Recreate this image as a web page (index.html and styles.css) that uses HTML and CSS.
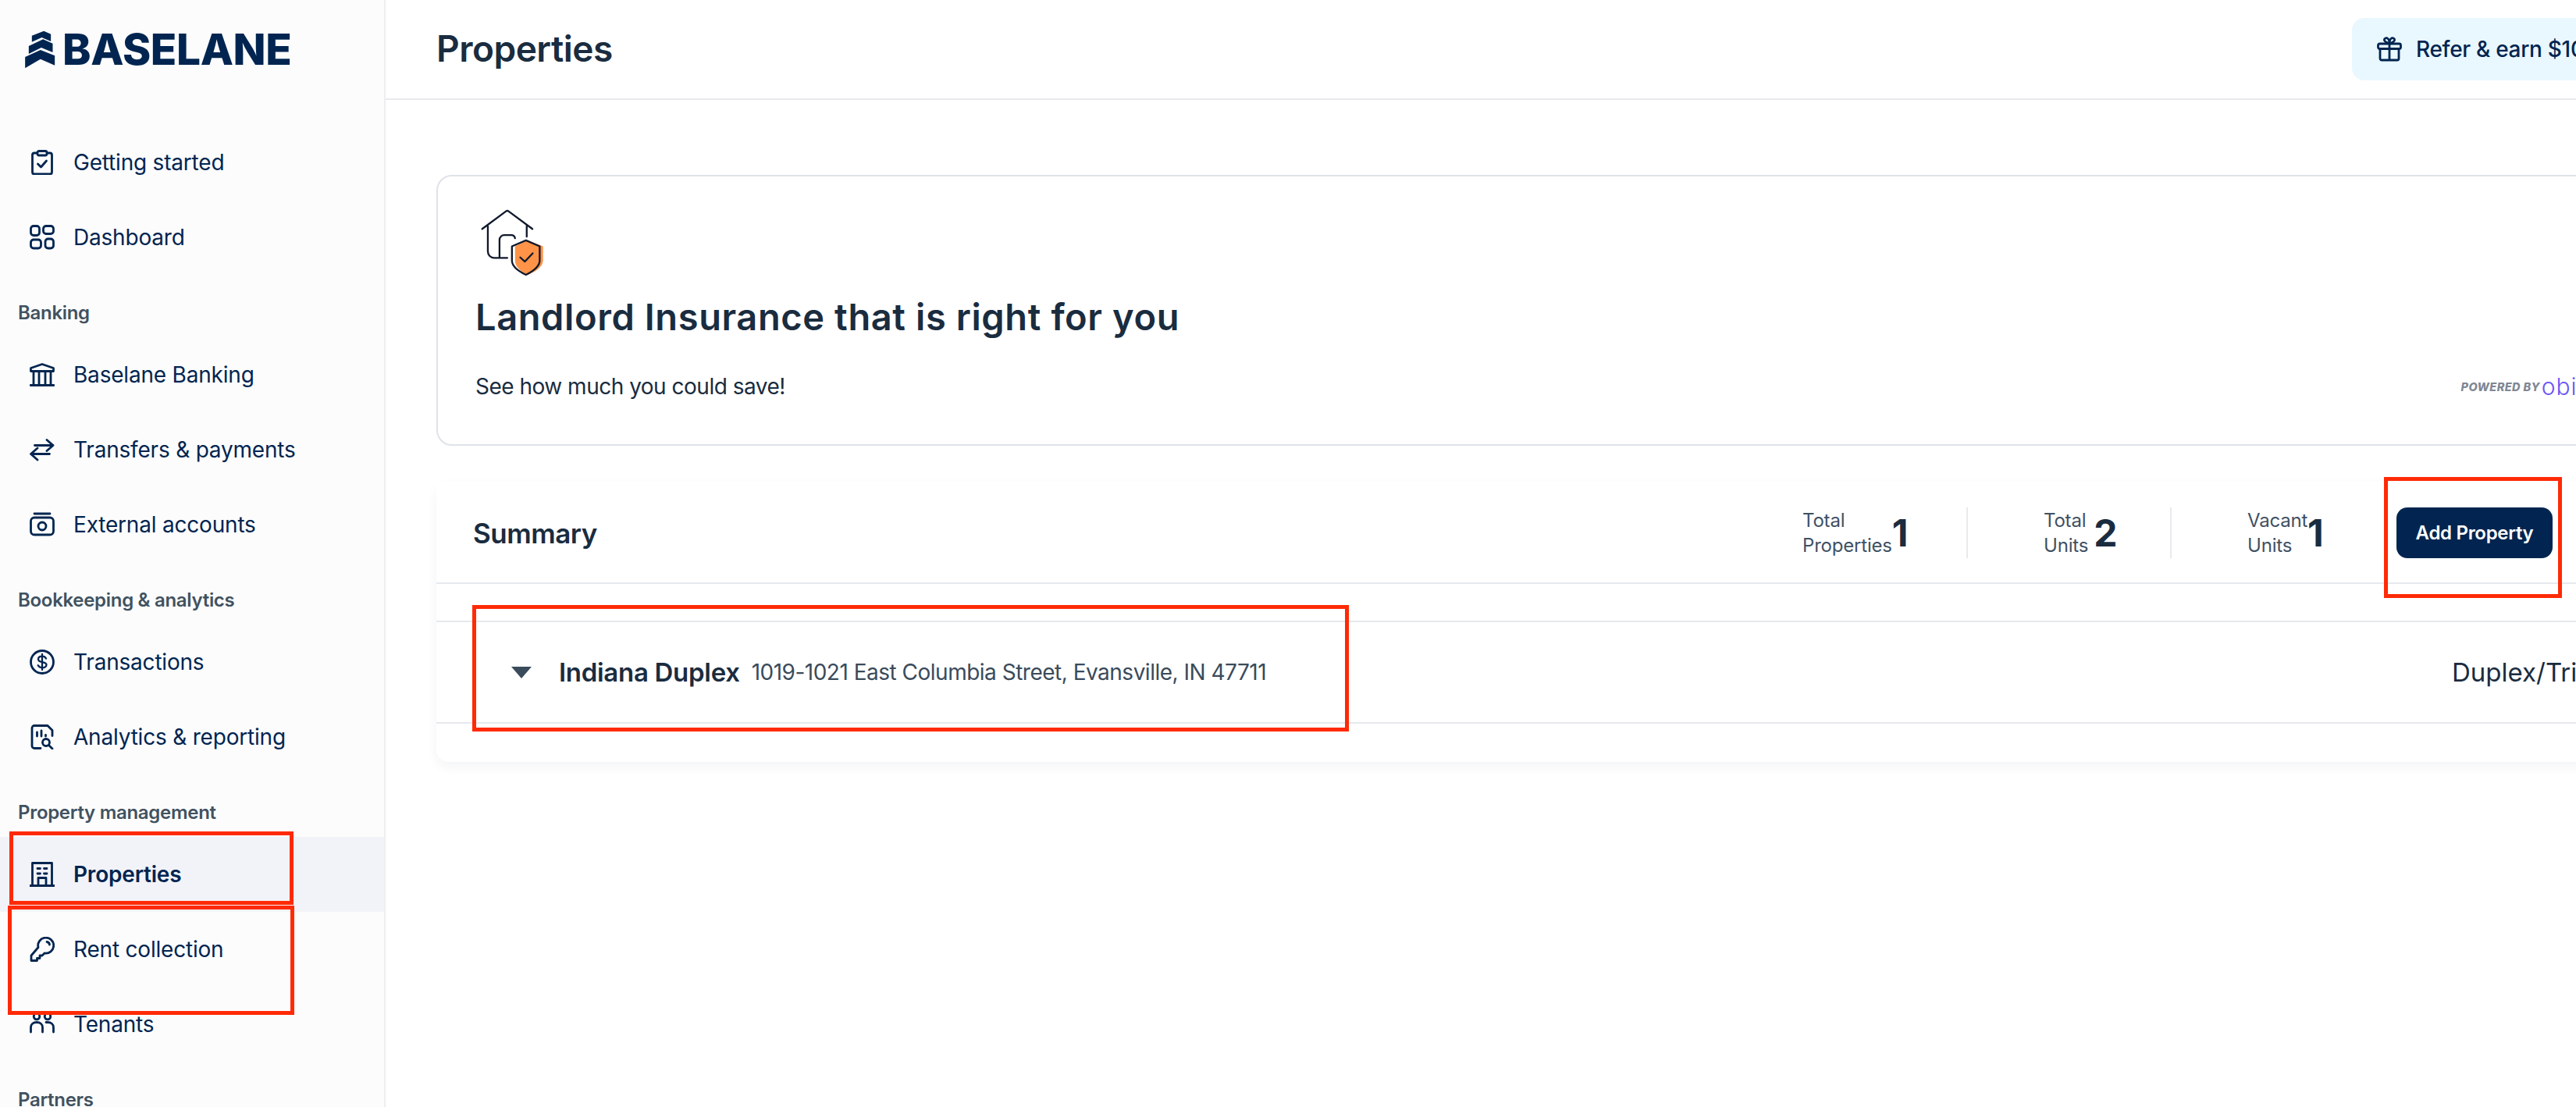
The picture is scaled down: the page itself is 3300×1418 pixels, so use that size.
FILE: index.html
```html
<!DOCTYPE html>
<html lang="en">
<head>
<meta charset="utf-8">
<title>Properties - Baselane</title>
<link rel="stylesheet" href="styles.css">
</head>
<body>
<div class="app">
  <aside class="sidebar">
    <div class="logo">
      <svg class="logo-mark" viewBox="60 55 125 150" aria-hidden="true"><path d="M66 160L125 133L180 155V192L125 168L66 203Z"/><path d="M80 118L135 92L172 108V142L128 124L80 148Z"/><path d="M92 78L138 60L165 72V100L130 85L92 102Z"/></svg>
      <span class="logo-text">BASELANE</span>
    </div>
    <nav class="nav">
      <a class="nav-item"><svg class="icon" viewBox="0 0 32 32"><rect x="3.500" y="4" width="25" height="27" rx="2.500"/><rect x="10" y="1.500" width="12" height="5.500" rx="2" class="fill-bg"/><path d="M10.500 18l4 4 7-8"/></svg><span>Getting started</span></a>
      <a class="nav-item"><svg class="icon" viewBox="0 0 32 32"><rect x="1.500" y="1.500" width="11" height="12" rx="3.500"/><rect x="17.500" y="1.500" width="13" height="10" rx="3.500"/><rect x="1.500" y="19" width="13" height="11" rx="3.500"/><rect x="20" y="18" width="10.500" height="12" rx="3.500"/></svg><span>Dashboard</span></a>
      <div class="nav-label">Banking</div>
      <a class="nav-item"><svg class="icon" viewBox="0 0 32 32"><path d="M1.500 11.500V7.500L16 2.500L30.500 7.500V11.500ZM1 29.500H31M5 12V29M12 12V29M20 12V29M27 12V29"/></svg><span>Baselane Banking</span></a>
      <a class="nav-item"><svg class="icon" viewBox="0 0 32 32"><path d="M22 3.500l8 7-8 7M30 10.500H6.500M10 14l-8.500 7.500L10 29M2 21.500H25.500"/></svg><span>Transfers &amp; payments</span></a>
      <a class="nav-item"><svg class="icon" viewBox="0 0 32 32"><path d="M6 2H26"/><rect x="1.500" y="7" width="29" height="22" rx="4.500"/><circle cx="16" cy="18" r="5"/></svg><span>External accounts</span></a>
      <div class="nav-label">Bookkeeping &amp; analytics</div>
      <a class="nav-item"><svg class="icon" viewBox="0 0 32 32"><circle cx="16" cy="16" r="14.500"/><path d="M21 11.500c-1-2-3-2.800-5-2.800-3 0-5 1.500-5 3.700 0 5 10.500 2.300 10.500 7.200 0 2.200-2.300 3.700-5.200 3.700-2.300 0-4.500-1-5.600-3M16 6v20" stroke-width="2.300"/></svg><span>Transactions</span></a>
      <a class="nav-item"><svg class="icon" viewBox="0 0 32 32"><path d="M14 30.500H6a3 3 0 0 1-3-3V4.500a3 3 0 0 1 3-3h17l6 6v7"/><path d="M9.500 10v5M15 8v7M20.500 13.500v1.500"/><circle cx="21" cy="23" r="4.500"/><path d="M24.500 26.500L29 31"/></svg><span>Analytics &amp; reporting</span></a>
      <div class="nav-label">Property management</div>
      <a class="nav-item active"><svg class="icon" viewBox="0 0 32 32"><path d="M0 30.500H32M3.500 30V1.500H28.500V30"/><path d="M10 8.500h3.500M18.500 8.500H22M10 15h3.500M18.500 15H22"/><path d="M11 30V20.500H21V30"/></svg><span>Properties</span></a>
      <a class="nav-item"><svg class="icon" viewBox="0 0 32 32"><path d="M11 13.500a10 10 0 1 1 8 7.500l-3 3h-3v3.500H9.500V30.500H2V24Z"/><path d="M22 6.500a4 4 0 0 1 3.500 3.500"/></svg><span>Rent collection</span></a>
      <a class="nav-item"><svg class="icon" viewBox="0 0 32 32"><circle cx="9" cy="6" r="3.800"/><circle cx="23" cy="6" r="3.800"/><path d="M1.500 26v-6c0-4 3-6.500 7.500-6.500s7.500 2.500 7.500 6.500v6M21 13.500h2c4.500 0 7.500 2.500 7.500 6.500v6"/></svg><span>Tenants</span></a>
      <div class="nav-label">Partners</div>
    </nav>
  </aside>
  <main class="main">
    <header class="topbar">
      <h1 class="page-title">Properties</h1>
      <a class="refer"><svg class="icon" viewBox="0 0 32 32"><rect x="1.500" y="9" width="29" height="6.500" rx="2"/><path d="M4 15.500V28a2 2 0 0 0 2 2H26a2 2 0 0 0 2-2V15.500M16 9V30M16 9c-2-1-6-2-6.500-4.500C9 2 12 .8 14 2.500c1.300 1 2 4 2 6.500 0-2.500.7-5.500 2-6.500 2-1.700 5-.5 4.500 2C22 7 18 8 16 9Z"/></svg><span>Refer &amp; earn $100</span></a>
    </header>
    <section class="content">
      <div class="promo">
        <svg class="promo-icon" viewBox="75 50 250 260" aria-hidden="true"><path class="shield-fill" d="M258 172L318 195V250C318 275 285 295 258 305C232 292 210 275 210 250V195Z"/><path class="line" d="M83 128L175 60a8 8 0 0 1 10 0L277 128M105 118V215a25 25 0 0 0 25 25H180M150 240V170a18 18 0 0 1 18-18H195a15 15 0 0 1 15 12M255 115V158"/><path class="line" d="M252 172L198 195V250C198 275 225 292 252 305C278 292 305 275 305 250V195Z"/><path class="line" d="M230 238L248 254L278 222"/></svg>
        <h2 class="promo-title">Landlord Insurance that is right for you</h2>
        <div class="promo-foot">
          <p class="promo-text">See how much you could save!</p>
          <div class="powered"><span class="powered-by">POWERED BY</span><span class="obie">obie</span></div>
        </div>
      </div>
      <div class="summary">
        <div class="summary-head">
          <h3 class="summary-title">Summary</h3>
          <div class="stat stat-a"><div class="stat-label">Total<br>Properties</div><div class="stat-value">1</div></div>
          <div class="stat stat-b"><div class="stat-label">Total<br>Units</div><div class="stat-value">2</div></div>
          <div class="stat stat-c"><div class="stat-label">Vacant<br>Units</div><div class="stat-value">1</div></div>
          <button class="add-btn">Add Property</button>
        </div>
        <div class="property-row">
          <span class="caret"></span>
          <span class="property-name">Indiana Duplex</span>
          <span class="property-address">1019-1021 East Columbia Street, Evansville, IN 47711</span>
          <span class="property-type">Duplex/Triplex</span>
        </div>
      </div>
    </section>
  </main>
  <div class="mark mark-properties"></div>
  <div class="mark mark-rent"></div>
  <div class="mark mark-add"></div>
  <div class="mark mark-row"></div>
</div>
</body>
</html>
```
FILE: styles.css
```css
* { box-sizing: border-box; }
html, body { margin: 0; height: 100%; background: #fff; }
body { font-family: Inter, "Liberation Sans", sans-serif; color: #1a2c3f; overflow: hidden; }
.app { position: relative; display: flex; width: 3300px; height: 1418px; overflow: hidden; }

.sidebar { flex: none; width: 494px; height: 100%; background: #fcfcfd; border-right: 2px solid #eceef0; overflow: hidden; }
.logo { height: 160px; padding: 38px 0 0 30px; display: flex; align-items: flex-start; gap: 8px; }
.logo-mark { width: 42px; height: 50px; fill: #012550; flex: none; }
.logo-text { font-weight: 800; font-size: 55px; line-height: 50px; color: #012550; letter-spacing: -0.400px; }
.nav-item { display: flex; align-items: center; gap: 24px; height: 96px; padding-left: 38px; font-size: 28px; color: #012550; letter-spacing: -0.200px; }
.nav-item.active { background: #f2f3f8; font-weight: 600; }
.icon { flex: none; width: 32px; height: 32px; fill: none; stroke: #012550; stroke-width: 2.800; stroke-linecap: round; stroke-linejoin: round; }
.fill-bg { fill: #fcfcfd; }
.nav-label { height: 80px; padding: 33px 0 0 23px; font-size: 24px; line-height: 32px; font-weight: 600; color: #41525f; letter-spacing: -0.300px; }

.main { flex: none; width: 2966px; display: flex; flex-direction: column; }
.topbar { height: 128px; flex: none; display: flex; align-items: center; justify-content: space-between; padding: 0 60px 2px 65px; border-bottom: 2px solid #e8e9eb; }
.page-title { margin: 0; font-size: 46px; font-weight: 600; letter-spacing: -0.500px; color: #1a2c3f; }
.refer { width: 387px; height: 80px; margin-top: 1px; display: flex; align-items: center; gap: 18px; padding-left: 32px; background: #e9f7ff; border-radius: 16px; font-size: 28px; font-weight: 500; letter-spacing: -0.300px; color: #012550; }
.content { padding: 96px 60px 0 65px; }

.promo { height: 347px; padding: 41px 78px 0 48px; border: 2px solid #dfe3e8; border-radius: 20px; background: #fff; }
.promo-icon { display: block; width: 83px; height: 87px; margin-left: 6px; }
.shield-fill { fill: #ff9347; }
.line { fill: none; stroke: #10192b; stroke-width: 7; stroke-linecap: round; stroke-linejoin: round; }
.promo-title { margin: 24px 0 0; font-size: 47px; line-height: 56px; font-weight: 600; letter-spacing: 0.600px; color: #1a2c3f; }
.promo-foot { display: flex; align-items: center; justify-content: space-between; margin-top: 43px; }
.promo-text { margin: 0; font-size: 28px; line-height: 36px; letter-spacing: -0.500px; color: #1a2c3f; }
.powered { display: flex; align-items: center; gap: 2px; height: 36px; }
.powered-by { font-size: 14.500px; font-weight: 800; font-style: italic; color: #808793; letter-spacing: 0.400px; }
.obie { font-size: 30px; font-weight: 300; color: #6a55f4; line-height: 36px; letter-spacing: 1px; }

.summary { margin-top: 46px; height: 359px; border-radius: 16px; background: #fff; box-shadow: 0 6px 16px rgba(20, 40, 70, 0.05); }
.summary-head { height: 131px; display: flex; align-items: center; padding: 2px 130px 0 47px; border-bottom: 2px solid #e6e9ed; background: #fff; }
.summary-title { margin: 0 auto 0 0; font-size: 35px; font-weight: 600; letter-spacing: -0.500px; color: #1a2c3f; }
.stat { height: 65px; display: flex; align-items: center; padding-left: 97px; border-right: 2px solid #e8eaed; }
.stat-a { width: 212px; padding-left: 0; }
.stat-b { width: 261px; }
.stat-c { width: 288px; border-right: 0; }
.stat-label { font-size: 24px; line-height: 32px; color: #3f5163; letter-spacing: -0.200px; }
.stat-value { font-size: 48px; font-weight: 700; line-height: 1; color: #1a2c3f; }
.stat-b .stat-value { margin-left: 7px; }
.add-btn { flex: none; width: 200px; height: 65px; border: 0; border-radius: 14px; background: #012550; color: #fff; font-family: inherit; font-size: 24px; font-weight: 600; letter-spacing: -0.300px; }
.property-row { display: flex; align-items: center; height: 132px; margin-top: 47px; padding: 0 0 0 96px; border-top: 2px solid #e6e9ed; border-bottom: 2px solid #e6e9ed; }
.caret { width: 0; height: 0; border-left: 13px solid transparent; border-right: 13px solid transparent; border-top: 15px solid #3a4b5b; margin-right: 35px; }
.property-name { font-size: 33px; font-weight: 600; letter-spacing: -0.300px; color: #1a2c3f; }
.property-address { margin-left: 15px; font-size: 28px; letter-spacing: -0.500px; color: #3a4b5b; }
.property-type { position: absolute; left: 3141px; font-size: 33px; color: #1a2c3f; white-space: nowrap; }

.mark { position: absolute; border: 5px solid #ff2a06; pointer-events: none; }
.mark-properties { left: 12px; top: 1065px; width: 364px; height: 94px; }
.mark-rent { left: 10px; top: 1160px; width: 367px; height: 140px; }
.mark-add { left: 3054px; top: 611px; width: 228px; height: 155px; }
.mark-row { left: 605px; top: 775px; width: 1123px; height: 162px; }
```
